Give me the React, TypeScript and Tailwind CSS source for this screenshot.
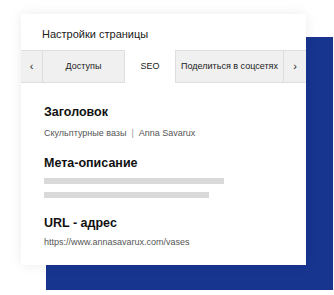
export default function App() {
  return (
    <div
      className="relative w-[334px] h-[295px] bg-white overflow-hidden"
      style={{ fontFamily: '"Liberation Sans", Arial, sans-serif' }}
    >
      {/* Blue backdrop */}
      <div className="absolute left-[46px] top-[37px] w-[287px] h-[253px] bg-[#17358f]" />

      {/* Settings card */}
      <div className="relative ml-[21px] mt-[14px] w-[285px] h-[251px] bg-white shadow-[0_0_12px_rgba(0,0,0,0.08)]">
        <div className="h-[36px] pl-[21px] pt-[15px] text-[11px] text-[#1a1a1a] leading-none">
          Настройки страницы
        </div>

        {/* Tabs */}
        <div className="flex h-[33px] text-[9px] text-[#1a1a1a]">
          <div className="w-[22px] flex items-center justify-center text-[11px] bg-[#f0f0f0] border-t border-b border-r border-[#dedede]">
            ‹
          </div>
          <div className="w-[81px] flex items-center justify-center bg-[#f0f0f0] border-t border-b border-[#dedede]">
            Доступы
          </div>
          <div className="w-[52px] flex items-center justify-center bg-white border-l border-r border-[#dedede]">
            SEO
          </div>
          <div className="w-[108px] flex items-center justify-center bg-[#f0f0f0] border-t border-b border-r border-[#dedede] whitespace-nowrap">
            Поделиться в соцсетях
          </div>
          <div className="w-[22px] flex items-center justify-center text-[11px] bg-[#f0f0f0] border-t border-b border-[#dedede]">
            ›
          </div>
        </div>

        {/* Content */}
        <div className="pl-[23px] pt-[23px]">
          <div className="text-[12.5px] font-bold text-[#111] leading-none">Заголовок</div>
          <div className="mt-[10px] text-[9px] text-[#555] leading-none flex items-center gap-[5px]">
            <span>Скульптурные вазы</span>
            <span className="text-[#999]">|</span>
            <span>Anna Savarux</span>
          </div>

          <div className="mt-[19px] text-[12.5px] font-bold text-[#111] leading-none">Мета-описание</div>
          <div className="mt-[8.5px] w-[180px] h-[6px] bg-[#d9d9d9]" />
          <div className="mt-[8px] w-[165px] h-[6px] bg-[#d9d9d9]" />

          <div className="mt-[19px] text-[12.5px] font-bold text-[#111] leading-none">URL - адрес</div>
          <div className="mt-[8.5px] text-[9px] text-[#555] leading-none">
            https://www.annasavarux.com/vases
          </div>
        </div>
      </div>
    </div>
  );
}
